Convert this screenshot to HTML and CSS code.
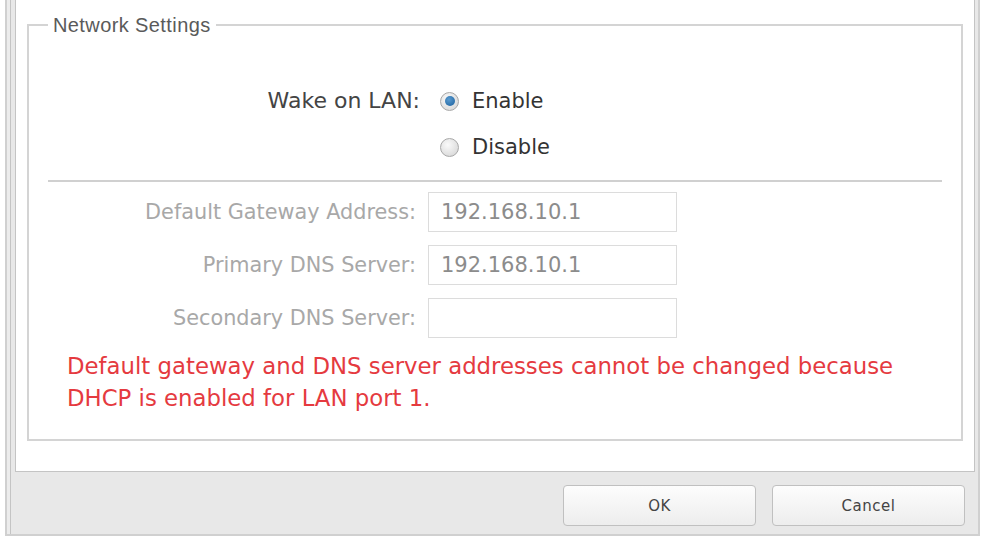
FILE: index.html
```html
<!DOCTYPE html>
<html lang="en">
<head>
  <meta charset="UTF-8" />
  <title>Network Settings</title>
  <link rel="stylesheet" href="styles.css">
</head>
<body>
  <div class="dialog">
    <div class="panel">
      <fieldset class="group">
        <legend>Network Settings</legend>

        <div class="wol">
          <span class="wol-label">Wake on LAN:</span>
          <div class="radios">
            <label class="radio"><span class="dot checked"></span>Enable</label>
            <label class="radio"><span class="dot"></span>Disable</label>
          </div>
        </div>

        <hr class="sep">

        <div class="rows">
          <span class="row-label">Default Gateway Address:</span>
          <div class="field">192.168.10.1</div>
          <span class="row-label">Primary DNS Server:</span>
          <div class="field">192.168.10.1</div>
          <span class="row-label">Secondary DNS Server:</span>
          <div class="field"></div>
        </div>

        <p class="warn">Default gateway and DNS server addresses cannot be changed because<br>DHCP is enabled for LAN port 1.</p>
      </fieldset>
    </div>

    <div class="actions">
      <button class="btn">OK</button>
      <button class="btn">Cancel</button>
    </div>
  </div>
</body>
</html>
```

FILE: styles.css
```css
* {
  box-sizing: border-box;
}

html, body {
  margin: 0;
  padding: 0;
  background: #fff;
  font-family: 'DejaVu Sans', sans-serif;
}

.dialog {
  width: 975px;
  height: 536px;
  margin-left: 5px;
  background: #e8e8e8;
  border: 2px solid #d0d0d0;
  border-top: none;
  box-shadow: inset 3px 0 0 #ececec, inset 4px 0 0 #c4c4c4;
  padding: 0 0 0 8px;
  display: flex;
  flex-direction: column;
}

.panel {
  height: 472px;
  width: 960px;
  background: #fff;
  border: 1px solid #c4c4c4;
  border-top: none;
  padding: 16px 11px 0 11px;
}

.group {
  margin: 0;
  height: 425px;
  border: 2px solid #d4d4d4;
  padding: 0 19px;
}

.group legend {
  margin-left: 0;
  padding: 0 5px;
  font-size: 20px;
  letter-spacing: 0.4px;
  line-height: 18px;
  color: #5a5a5a;
  font-family: 'Liberation Sans', sans-serif;
}

.wol {
  display: grid;
  grid-template-columns: 372px auto;
  column-gap: 20px;
  margin-top: 53px;
}

.wol-label {
  text-align: right;
  font-size: 22px;
  color: #444;
  line-height: 28px;
}

.radios {
  display: flex;
  flex-direction: column;
  gap: 18px;
}

.radio {
  display: flex;
  align-items: center;
  gap: 13px;
  font-size: 21px;
  color: #333;
  line-height: 28px;
}

.dot {
  width: 19px;
  height: 19px;
  border-radius: 50%;
  border: 1px solid #a8a8a8;
  background: radial-gradient(circle at 40% 35%, #fafafa, #d2d2d2);
  display: flex;
  align-items: center;
  justify-content: center;
}

.dot.checked::after {
  content: "";
  width: 10px;
  height: 10px;
  border-radius: 50%;
  background: radial-gradient(circle at 40% 35%, #5a9bd0, #1a5f9c);
}

.sep {
  border: none;
  border-top: 2px solid #d0d0d0;
  margin: 19px 0 0 0;
}

.rows {
  display: grid;
  grid-template-columns: 368px 249px;
  column-gap: 12px;
  row-gap: 13px;
  margin-top: 10px;
  align-items: center;
}

.row-label {
  text-align: right;
  font-size: 20.8px;
  color: #a8a8a8;
}

.field {
  height: 40px;
  border: 1px solid #dcdcdc;
  font-size: 21px;
  color: #8c8c8c;
  padding-left: 12px;
  line-height: 38px;
}

.warn {
  margin: 12px 0 0 19px;
  font-size: 22.8px;
  line-height: 32px;
  color: #e53a3f;
}

.actions {
  display: flex;
  justify-content: flex-end;
  gap: 16px;
  padding: 13px 13px 0 0;
}

.btn {
  width: 193px;
  height: 41px;
  border: 1px solid #c0c0c0;
  border-radius: 4px;
  background: linear-gradient(#fdfdfd, #ededed);
  font-family: 'DejaVu Sans', sans-serif;
  font-size: 15px;
  letter-spacing: 0.5px;
  color: #444;
}
```
